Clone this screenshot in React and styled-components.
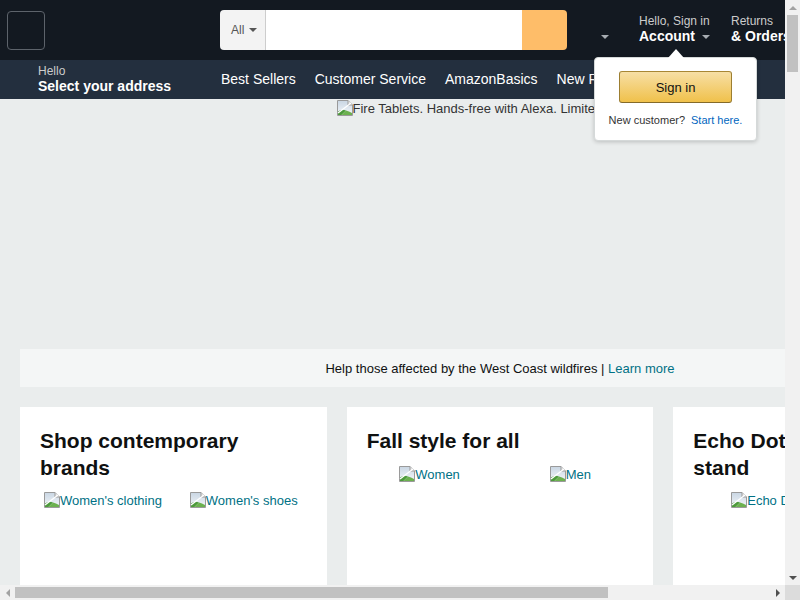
import React from "react";
import styled, { createGlobalStyle, css } from "styled-components";

const GlobalStyle = createGlobalStyle`
  html, body { margin: 0; padding: 0; overflow: hidden; }
  body {
    background: #eaeded;
    font-family: "Liberation Sans", Arial, sans-serif;
    color: #0f1111;
  }
  * { box-sizing: border-box; }
`;

const Page = styled.div`
  width: 1000px;
  min-height: 5700px;
`;

/* ---------- header ---------- */

const TopBar = styled.header`
  display: flex;
  align-items: stretch;
  height: 60px;
  background: #131921;
  padding-left: 7px;
  color: #fff;
`;

const Logo = styled.a`
  align-self: center;
  width: 38px;
  height: 39px;
  border: 1px solid #5d636b;
  border-radius: 4px;
  margin-right: 175px;
`;

const Search = styled.form`
  align-self: center;
  display: flex;
  width: 347px;
  height: 40px;
  border-radius: 4px;
  overflow: hidden;
  margin: 0;
`;

const Scope = styled.div`
  width: 46px;
  display: flex;
  align-items: center;
  gap: 5px;
  padding-left: 11px;
  background: #f3f3f3;
  border-right: 1px solid #cdcdcd;
  color: #555;
  font-size: 12px;
`;

const Caret = styled.span`
  display: inline-block;
  width: 0;
  height: 0;
  border-left: 4px solid transparent;
  border-right: 4px solid transparent;
  border-top: 4px solid ${(p) => p.$color || "#555"};
  margin-left: ${(p) => p.$ml || 0}px;
`;

const SearchInput = styled.input`
  flex: 1;
  border: none;
  outline: none;
  background: #fff;
  padding: 0 10px;
  font-size: 15px;
`;

const SearchButton = styled.button`
  width: 45px;
  border: none;
  background: #febd69;
`;

const LangTool = styled.div`
  width: 72px;
  display: flex;
  align-items: center;
  padding-top: 14px;
`;

const NavTool = styled.div`
  position: relative;
  width: ${(p) => p.$w}px;
  display: flex;
  flex-direction: column;
  justify-content: center;
  padding-bottom: 1px;
`;

const ToolLine1 = styled.span`
  font-size: 12px;
  line-height: 14px;
  color: #ccc;
  white-space: nowrap;
`;

const ToolLine2 = styled.span`
  font-size: 14px;
  line-height: 17px;
  font-weight: 700;
  color: #fff;
  white-space: nowrap;
  display: flex;
  align-items: center;
`;

const Popover = styled.div`
  position: absolute;
  top: 57px;
  left: -45px;
  width: 163px;
  padding: 13px 0 13px;
  background: #fff;
  border: 1px solid #d5d9d9;
  border-radius: 4px;
  box-shadow: 0 1px 4px rgba(0, 0, 0, 0.2);
  display: flex;
  flex-direction: column;
  align-items: center;
  z-index: 10;

  &::before {
    content: "";
    position: absolute;
    top: -9px;
    left: 50%;
    transform: translateX(-50%);
    border-left: 8px solid transparent;
    border-right: 8px solid transparent;
    border-bottom: 9px solid #fff;
  }
`;

const SignInButton = styled.button`
  width: 113px;
  height: 32px;
  border: 1px solid;
  border-color: #a88734 #9c7e31 #846a29;
  border-radius: 3px;
  background: linear-gradient(to bottom, #f7dfa5, #f0c14b);
  font-family: inherit;
  font-size: 13px;
  color: #111;
`;

const NewCustomer = styled.div`
  margin-top: 10px;
  font-size: 11px;
  line-height: 14px;
  color: #333;
  white-space: nowrap;
`;

const SmallLink = styled.a`
  color: #0066c0;
  margin-left: 6px;
`;

const NavBar = styled.nav`
  display: flex;
  align-items: center;
  height: 39px;
  background: #232f3e;
  padding-left: 38px;
  color: #fff;
`;

const Address = styled.div`
  width: 183px;
  display: flex;
  flex-direction: column;
`;

const NavLinks = styled.div`
  display: flex;
  gap: 19px;
  font-size: 14px;
  white-space: nowrap;
  padding-bottom: 1px;
`;

const NavLink = styled.a`
  color: #fff;
`;

/* ---------- content ---------- */

const Hero = styled.div`
  height: 250px;
  padding-top: 1px;
  text-align: center;
  font-size: 13px;
  color: #333;
`;

const Broken = styled.span`
  display: inline-flex;
  align-items: flex-end;
  font-size: 13px;
  line-height: 15px;
  color: ${(p) => p.$color || "inherit"};
  white-space: nowrap;
`;

const Banner = styled.div`
  margin: 0 20px;
  height: 38px;
  background: #f4f6f6;
  text-align: center;
  font-size: 13px;
  line-height: 39px;
  color: #0f1111;
`;

const TealLink = styled.a`
  color: #007185;
`;

const CardGrid = styled.div`
  display: grid;
  grid-template-columns: repeat(3, 1fr);
  gap: 20px;
  padding: 20px 20px 0;
`;

const Card = styled.section`
  background: #fff;
  height: 420px;
  padding: 20px;
`;

const CardTitle = styled.h2`
  margin: 0;
  font-size: 21px;
  line-height: 27px;
  font-weight: 700;
  color: #0f1111;
`;

const Tiles = styled.div`
  display: grid;
  grid-template-columns: repeat(${(p) => p.$cols}, 1fr);
  column-gap: 15px;
  margin-top: ${(p) => p.$mt}px;
  text-align: center;
`;

/* ---------- window scrollbars (overlay) ---------- */

const ScrollTrack = styled.div`
  position: fixed;
  background: #f1f1f1;
  display: flex;
  z-index: 50;
  ${(p) =>
    p.$vertical
      ? css`
          top: 0;
          right: 0;
          width: 15px;
          height: 585px;
          flex-direction: column;
        `
      : css`
          left: 0;
          bottom: 0;
          width: 785px;
          height: 15px;
          flex-direction: row;
        `}
`;

const ScrollCorner = styled.div`
  position: fixed;
  right: 0;
  bottom: 0;
  width: 15px;
  height: 15px;
  background: #dcdcdc;
  z-index: 50;
`;

const ScrollArrow = styled.div`
  width: 15px;
  height: 15px;
  flex: none;
  display: flex;
  align-items: center;
  justify-content: center;
  &::after {
    content: "";
    width: 0;
    height: 0;
    ${(p) => {
      const c = p.$dim ? "#a3a3a3" : "#505050";
      switch (p.$dir) {
        case "up":
          return css`
            border-left: 4px solid transparent;
            border-right: 4px solid transparent;
            border-bottom: 4px solid ${c};
          `;
        case "down":
          return css`
            border-left: 4px solid transparent;
            border-right: 4px solid transparent;
            border-top: 4px solid ${c};
          `;
        case "left":
          return css`
            border-top: 4px solid transparent;
            border-bottom: 4px solid transparent;
            border-right: 4px solid ${c};
          `;
        default:
          return css`
            border-top: 4px solid transparent;
            border-bottom: 4px solid transparent;
            border-left: 4px solid ${c};
          `;
      }
    }}
  }
`;

const ScrollRail = styled.div`
  flex: 1;
  display: flex;
  flex-direction: ${(p) => (p.$vertical ? "column" : "row")};
  padding: ${(p) => (p.$vertical ? "0 2px" : "2px 0")};
`;

const ScrollThumb = styled.div`
  background: #c1c1c1;
  flex: none;
`;

/* ---------- icons ---------- */

const BrokenIcon = () => (
  <svg width="16" height="16" viewBox="0 0 16 16">
    <defs>
      <linearGradient id="sky" x1="0" y1="0" x2="0" y2="1">
        <stop offset="0" stopColor="#c9d6e3" />
        <stop offset="1" stopColor="#f4f7fa" />
      </linearGradient>
    </defs>
    <path d="M0.5 0.5H11L15.5 5V15.5H0.5Z" fill="url(#sky)" stroke="#9a9a9a" />
    <path d="M11 0.5V5H15.5" fill="#e8e8e8" stroke="#9a9a9a" />
    <path d="M1 15V11.5Q5 8.5 9 10.5L4.5 15Z" fill="#4d9a3c" />
    <path d="M9 10.5Q12 11 15 13V15H4.5Z" fill="#6cb14f" />
    <path d="M1 13L14 3" stroke="#fff" strokeWidth="1.3" />
  </svg>
);

const ImgAlt = ({ children, color }) => (
  <Broken $color={color}>
    <BrokenIcon />
    {children}
  </Broken>
);

const cards = [
  {
    title: "Shop contemporary brands",
    tiles: ["Women's clothing", "Women's shoes"],
    mt: 11,
  },
  { title: "Fall style for all", tiles: ["Women", "Men"], mt: 12 },
  { title: "Echo Dot wall mount stand", tiles: ["Echo Dot with clock wall stand"], mt: 11 },
];

export default function App() {
  return (
    <>
      <GlobalStyle />
      <Page>
        <TopBar>
          <Logo />
          <Search onSubmit={(e) => e.preventDefault()}>
            <Scope>
              All
              <Caret />
            </Scope>
            <SearchInput />
            <SearchButton type="submit" />
          </Search>
          <LangTool>
            <Caret $color="#a7acb2" $ml={34} />
          </LangTool>
          <NavTool $w={92}>
            <ToolLine1>Hello, Sign in</ToolLine1>
            <ToolLine2>
              Account
              <Caret $color="#a7acb2" $ml={7} />
            </ToolLine2>
            <Popover>
              <SignInButton>Sign in</SignInButton>
              <NewCustomer>
                New customer?
                <SmallLink>Start here.</SmallLink>
              </NewCustomer>
            </Popover>
          </NavTool>
          <NavTool $w={90}>
            <ToolLine1>Returns</ToolLine1>
            <ToolLine2>&amp; Orders</ToolLine2>
          </NavTool>
        </TopBar>
        <NavBar>
          <Address>
            <ToolLine1>Hello</ToolLine1>
            <ToolLine2>Select your address</ToolLine2>
          </Address>
          <NavLinks>
            <NavLink>Best Sellers</NavLink>
            <NavLink>Customer Service</NavLink>
            <NavLink>AmazonBasics</NavLink>
            <NavLink>New Releases</NavLink>
            <NavLink>Today's Deals</NavLink>
          </NavLinks>
        </NavBar>
        <Hero>
          <ImgAlt>Fire Tablets. Hands-free with Alexa. Limited-time offer.</ImgAlt>
        </Hero>
        <Banner>
          Help those affected by the West Coast wildfires | <TealLink>Learn more</TealLink>
        </Banner>
        <CardGrid>
          {cards.map((c) => (
            <Card key={c.title}>
              <CardTitle>{c.title}</CardTitle>
              <Tiles $cols={c.tiles.length} $mt={c.mt}>
                {c.tiles.map((t) => (
                  <div key={t}>
                    <ImgAlt color="#007185">{t}</ImgAlt>
                  </div>
                ))}
              </Tiles>
            </Card>
          ))}
        </CardGrid>
      </Page>

      <ScrollTrack $vertical>
        <ScrollArrow $dir="up" $dim />
        <ScrollRail $vertical>
          <ScrollThumb style={{ height: 57 }} />
        </ScrollRail>
        <ScrollArrow $dir="down" />
      </ScrollTrack>
      <ScrollTrack>
        <ScrollArrow $dir="left" $dim />
        <ScrollRail>
          <ScrollThumb style={{ width: 593 }} />
        </ScrollRail>
        <ScrollArrow $dir="right" />
      </ScrollTrack>
      <ScrollCorner />
    </>
  );
}
